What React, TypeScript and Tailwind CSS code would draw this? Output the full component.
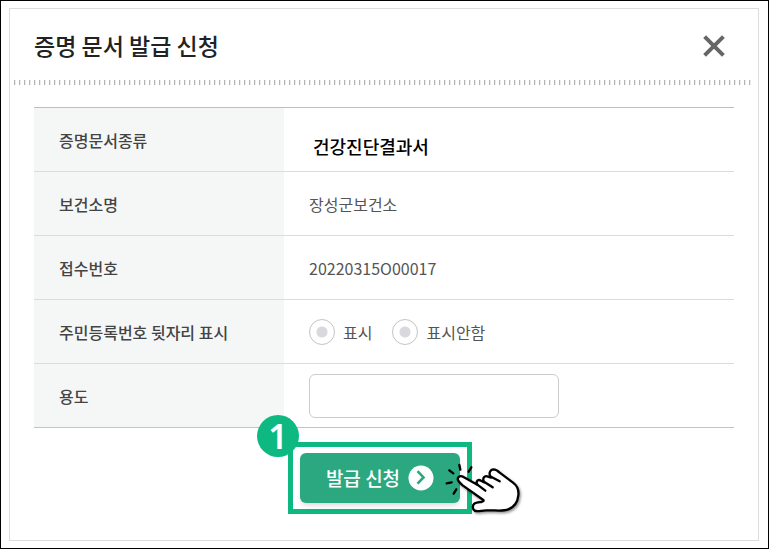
import { useState } from 'react'
import type { ReactNode } from 'react'

function CloseIcon() {
  return (
    <svg viewBox="0 0 22 22" className="h-[22px] w-[22px]" aria-hidden="true">
      <path d="M1.6 1.6 20.4 20.4M20.4 1.6 1.6 20.4" fill="none" stroke="#666" strokeWidth="4" />
    </svg>
  )
}

function ArrowIcon() {
  return (
    <svg viewBox="0 0 26 26" className="h-[26px] w-[26px]" aria-hidden="true">
      <circle cx="13" cy="13" r="12.5" fill="#fff" />
      <path d="m9.5 6.2 6 6.2-6 6.2" fill="none" stroke="#2ba880" strokeWidth="2.6" />
    </svg>
  )
}

function HandPointer({ className }: { className: string }) {
  return (
    <svg viewBox="0 0 270 240" className={className} aria-hidden="true">
      <g fill="none" stroke="#000" strokeWidth="7" strokeLinecap="round">
        <path d="m28 76 12 9M58 60l3 14M94 67l-8 13M20 115l15-3M49 133l-8 13" />
      </g>
      <path
        d="M55 107C50 98 59 90 69 95L112 119C106 108 115 102 123 107L132 112C126 99 134 90 144 95L153 98C145 87 149 74 161 73C168 73 173 77 179 83L219 113C231 122 237 136 235 151C233 172 220 187 205 193C188 200 165 195 138 196C122 197 112 201 104 197C97 192 97 181 103 176C107 172 113 172 124 171C129 170 132 168 130 165L68 121C62 116 58 112 55 107Z"
        fill="#fff"
        stroke="#000"
        strokeWidth="7"
        strokeLinejoin="round"
        className="drop-shadow-[4px_5px_3px_rgba(0,0,0,0.4)]"
      />
      <path
        d="m112 119 24 18M132 110l26 17M153 95l26 14"
        fill="none"
        stroke="#000"
        strokeWidth="7"
        strokeLinecap="round"
      />
    </svg>
  )
}

function Row({ label, children }: { label: ReactNode; children: ReactNode }) {
  return (
    <tr className="h-16 border-b border-[#dcdcdc] last:border-[#c4c4c4]">
      <th scope="row" className="w-[250px] bg-[#f5f7f7] pl-[25px] text-left font-medium text-[#444]">
        {label}
      </th>
      <td className="pl-[25px] text-[#555]">{children}</td>
    </tr>
  )
}

const displayOptions = [
  { value: 'show', label: '표시' },
  { value: 'hide', label: '표시안함' },
]

export default function App() {
  const [display, setDisplay] = useState('')
  const [purpose, setPurpose] = useState('')

  return (
    <div className="flex min-h-screen flex-col border border-black bg-white py-[7px] pr-[9px] pl-2 font-['Noto_Sans_CJK_KR',sans-serif] text-base">
      <main className="grow border border-[#dcdcdc]">
        <header className="flex h-[71px] items-center justify-between pt-[2px] pr-[33px] pl-6">
          <h1 className="text-[23px] font-medium text-[#222]">증명 문서 발급 신청</h1>
          <button type="button" aria-label="닫기">
            <CloseIcon />
          </button>
        </header>
        <div className="mx-1 h-[5px] bg-[repeating-linear-gradient(90deg,#b4b4b4_0_1px,#ececec_1px_2px,transparent_2px_5px)]" />

        <form className="px-6 pt-[22px]" onSubmit={(e) => e.preventDefault()}>
          <table className="w-full border-collapse border-t border-[#bfbfbf]">
            <tbody>
              <Row label="증명문서종류">
                <span className="block pt-3 pl-1 text-lg font-medium text-black">건강진단결과서</span>
              </Row>
              <Row label="보건소명">장성군보건소</Row>
              <Row label="접수번호">20220315O00017</Row>
              <Row label="주민등록번호 뒷자리 표시">
                <div className="flex gap-5" role="radiogroup" aria-label="주민등록번호 뒷자리 표시">
                  {displayOptions.map((option) => (
                    <label key={option.value} className="flex items-center gap-2">
                      <input
                        type="radio"
                        name="display"
                        value={option.value}
                        checked={display === option.value}
                        onChange={() => setDisplay(option.value)}
                        className="h-[26px] w-[26px] appearance-none rounded-full border border-[#c4c4c4] bg-[radial-gradient(circle,#d8d9dc_5px,#fff_6px)] checked:bg-[radial-gradient(circle,#2ba880_5px,#fff_6px)]"
                      />
                      {option.label}
                    </label>
                  ))}
                </div>
              </Row>
              <Row label={<label htmlFor="purpose">용도</label>}>
                <input
                  id="purpose"
                  type="text"
                  value={purpose}
                  onChange={(e) => setPurpose(e.target.value)}
                  className="block h-11 w-[250px] rounded-md border border-[#ccc] px-3"
                />
              </Row>
            </tbody>
          </table>

          <div className="flex justify-center pt-[14px] pr-2">
            <div className="relative border-5 border-[#0db980] p-[6px] px-[7px]">
              <button
                type="submit"
                className="flex h-[50px] w-40 items-center justify-center gap-2 rounded-md bg-[#2ba880] text-[19px] font-medium text-white shadow-md shadow-black/10"
              >
                발급 신청
                <ArrowIcon />
              </button>
              <span className="absolute -top-8 -left-9 flex h-[42px] w-[42px] items-center justify-center rounded-full bg-[#0db980] font-['Noto_Sans',sans-serif] text-[34px] leading-none font-semibold text-white">
                1
              </span>
              <HandPointer className="pointer-events-none absolute -top-[2px] left-[147px] h-20 w-[90px] max-w-none" />
            </div>
          </div>
        </form>
      </main>
    </div>
  )
}
